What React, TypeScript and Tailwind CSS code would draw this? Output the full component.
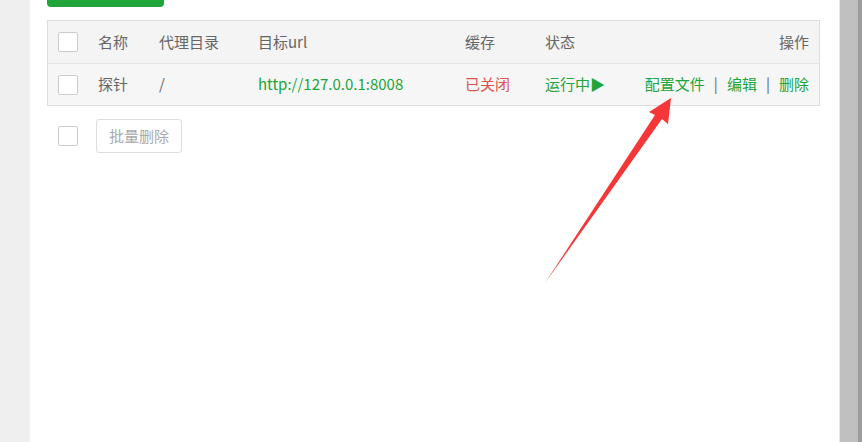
import React from "react";

const Check = () => (
  <div className="w-[20px] h-[20px] border border-[#cccccc] rounded-[2px] bg-white shrink-0" />
);

export default function App() {
  return (
    <div
      className="relative flex w-[862px] h-[442px] overflow-hidden bg-[#efefef] text-[15px]"
      style={{ fontFamily: '"Noto Sans CJK SC", "Noto Sans", sans-serif' }}
    >
      <div className="w-[30px] shrink-0 bg-[#efefef]" />
      <div className="flex-1 bg-white pl-[17px] pr-[19px]">
        <div className="w-[117px] h-[7px] bg-[#20a53a] rounded-b-[4px]" />
        <div className="mt-[13px] border border-[#dddddd] bg-[#f6f6f6]">
          <div className="flex items-center h-[43px] border-b border-[#e4e4e4] text-[#666666] pl-[10px] pr-[10px] bg-[#f4f4f4]">
            <Check />
            <div className="w-[61px] ml-[20px]">名称</div>
            <div className="w-[99px]">代理目录</div>
            <div className="w-[207px]">目标url</div>
            <div className="w-[80px]">缓存</div>
            <div className="flex-1">状态</div>
            <div>操作</div>
          </div>
          <div className="flex items-center h-[41px] text-[#666666] pl-[10px] pr-[10px]">
            <Check />
            <div className="w-[61px] ml-[20px]">探针</div>
            <div className="w-[99px]">/</div>
            <div className="w-[207px] text-[#20a53a]">http://127.0.0.1:8008</div>
            <div className="w-[80px] text-[#d9534f]">已关闭</div>
            <div className="flex-1 text-[#20a53a]">运行中▶</div>
            <div className="flex items-center text-[#20a53a]">
              <span>配置文件</span>
              <span className="mx-[9px] text-[#666666]">|</span>
              <span>编辑</span>
              <span className="mx-[9px] text-[#666666]">|</span>
              <span>删除</span>
            </div>
          </div>
        </div>
        <div className="flex items-center mt-[13px] pl-[11px]">
          <Check />
          <button className="ml-[18px] h-[34px] px-[12px] border border-[#dddddd] rounded-[3px] bg-white text-[#aaaaaa] text-[15px]">
            批量删除
          </button>
        </div>
      </div>
      <div className="w-[1px] shrink-0 bg-[#e6e6e6]" />
      <div className="w-[18px] shrink-0 bg-[#c0c0c0]" />
      <div className="w-[4px] shrink-0 bg-[#9c9c9c]" />
      <svg className="absolute left-0 top-0" width="862" height="442" viewBox="0 0 862 442">
        <polygon
          points="545,283 655,115 649,112 671,98 668,124 662,119"
          fill="#f73737"
        />
      </svg>
    </div>
  );
}
